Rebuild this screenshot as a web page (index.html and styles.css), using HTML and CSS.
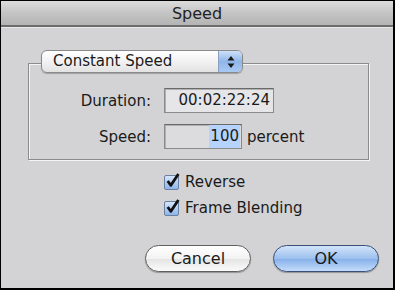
FILE: index.html
```html
<!DOCTYPE html>
<html>
<head>
<meta charset="utf-8">
<link rel="stylesheet" href="styles.css">
</head>
<body>
<div class="window">
  <div class="titlebar">Speed</div>
  <div class="content">
    <div class="group">
      <div class="popup">
        <span class="popup-label">Constant Speed</span>
        <span class="stepper">
          <svg width="10" height="14" viewBox="0 0 10 14"><path d="M5 1 L8.5 5.5 H1.5 Z M5 13 L8.5 8.5 H1.5 Z" fill="#1a1a1a"/></svg>
        </span>
      </div>
      <div class="row">
        <span class="label">Duration:</span>
        <span class="field duration">00:02:22:24</span>
      </div>
      <div class="row">
        <span class="label">Speed:</span>
        <span class="field speed"><span class="sel">100</span></span>
        <span class="unit">percent</span>
      </div>
    </div>
    <div class="checks">
      <div class="check"><span class="box"><svg width="15" height="15" viewBox="0 0 14 14"><path d="M2.5 7.5 L5.5 11.5 L12.5 1" fill="none" stroke="#111" stroke-width="2.6" stroke-linejoin="round"/></svg></span>Reverse</div>
      <div class="check"><span class="box"><svg width="15" height="15" viewBox="0 0 14 14"><path d="M2.5 7.5 L5.5 11.5 L12.5 1" fill="none" stroke="#111" stroke-width="2.6" stroke-linejoin="round"/></svg></span>Frame Blending</div>
    </div>
    <div class="buttons">
      <button class="btn cancel">Cancel</button>
      <button class="btn ok">OK</button>
    </div>
  </div>
</div>
</body>
</html>
```
FILE: styles.css
```css
html, body { margin: 0; padding: 0; }
body { width: 395px; height: 290px; overflow: hidden; background: #000; font-family: "DejaVu Sans", sans-serif; color: #1a1a1a; }
.window {
  box-sizing: border-box; width: 395px; height: 290px;
  border: 1px solid #000; border-right-width: 2px; border-bottom-width: 2px;
  background: #d3d3d5;
}
.titlebar {
  height: 26px; box-sizing: border-box;
  background: linear-gradient(#dcdcdc, #c4c4c4 50%, #b4b4b4);
  border-bottom: 2px solid #6c6c6c;
  text-align: center; font-size: 16px; line-height: 25px; color: #222;
  box-shadow: 0 1px 0 #e8e8e8;
}
.content { padding: 36px 0 0 27px; }
.group {
  box-sizing: border-box; width: 341px; height: 97px;
  border: 1px solid #8c8c8c; box-shadow: inset 1px 1px 0 #f4f4f4, 1px 1px 0 #f4f4f4;
  padding: 0 0 0 12px;
}
.popup {
  display: flex; align-items: stretch;
  width: 202px; height: 23px; box-sizing: border-box; margin-top: -14px;
  border: 1px solid #8a8a8a; border-radius: 6px;
  background: linear-gradient(#ffffff, #f2f2f2 50%, #e2e2e2);
  box-shadow: 0 1px 1px rgba(0,0,0,0.25);
  overflow: hidden; font-size: 15px;
}
.popup-label { flex: 1; padding-left: 11px; line-height: 21px; }
.stepper {
  width: 23px; display: flex; align-items: center; justify-content: center;
  background: linear-gradient(#cfe0f8, #8fb6ea 50%, #a9c8f2);
  border-left: 1px solid #8aa0c0;
}
.row { display: flex; align-items: center; height: 25px; margin-top: 11px; font-size: 15px; }
.row:nth-of-type(2) { margin-top: 15px; }
.label { width: 123px; text-align: right; padding-right: 13px; box-sizing: border-box; }
.field {
  box-sizing: border-box; height: 25px; border: 1px solid #8a8a8a; border-top-color: #6a6a6a;
  background: #e2e2e4; box-shadow: inset 1px 1px 0 #b0b0b0;
  line-height: 23px; text-align: right; font-size: 15px;
}
.duration { width: 110px; padding-right: 3px; background: #e6e6e8; }
.speed { width: 78px; padding-right: 1px; background: #dcdcde; }
.sel { background: #b5d3fd; padding: 0 1px; display: inline-block; line-height: 23px; }
.unit { margin-left: 5px; }
.checks { padding: 9px 0 0 136px; font-size: 15px; }
.check { display: flex; align-items: center; height: 26px; }
.box {
  width: 13px; height: 13px; margin-right: 6px; border: 1px solid #6b7fa0; border-radius: 2px;
  background: linear-gradient(#d6e6fb, #8db4ea); display: flex; align-items: center; justify-content: center;
  overflow: visible;
}
.box svg { margin-top: -3px; margin-left: 2px; flex: none; }
.buttons { display: flex; gap: 22px; padding: 24px 0 0 117px; }
.btn {
  width: 106px; height: 27px; border-radius: 14px; box-sizing: border-box;
  font-family: "DejaVu Sans", sans-serif; font-size: 16px; color: #1a1a1a; padding: 0;
  border: 1px solid #5f5f5f;
  box-shadow: 0 1px 1px rgba(0,0,0,0.3);
}
.cancel { background: linear-gradient(#ffffff, #f3f3f3 50%, #e4e4e4 52%, #fbfbfb); }
.ok { border-color: #3a4f7a; background: linear-gradient(#d4e4fa, #9cc0ee 50%, #86b0ea 52%, #c4dcfa); }
```
